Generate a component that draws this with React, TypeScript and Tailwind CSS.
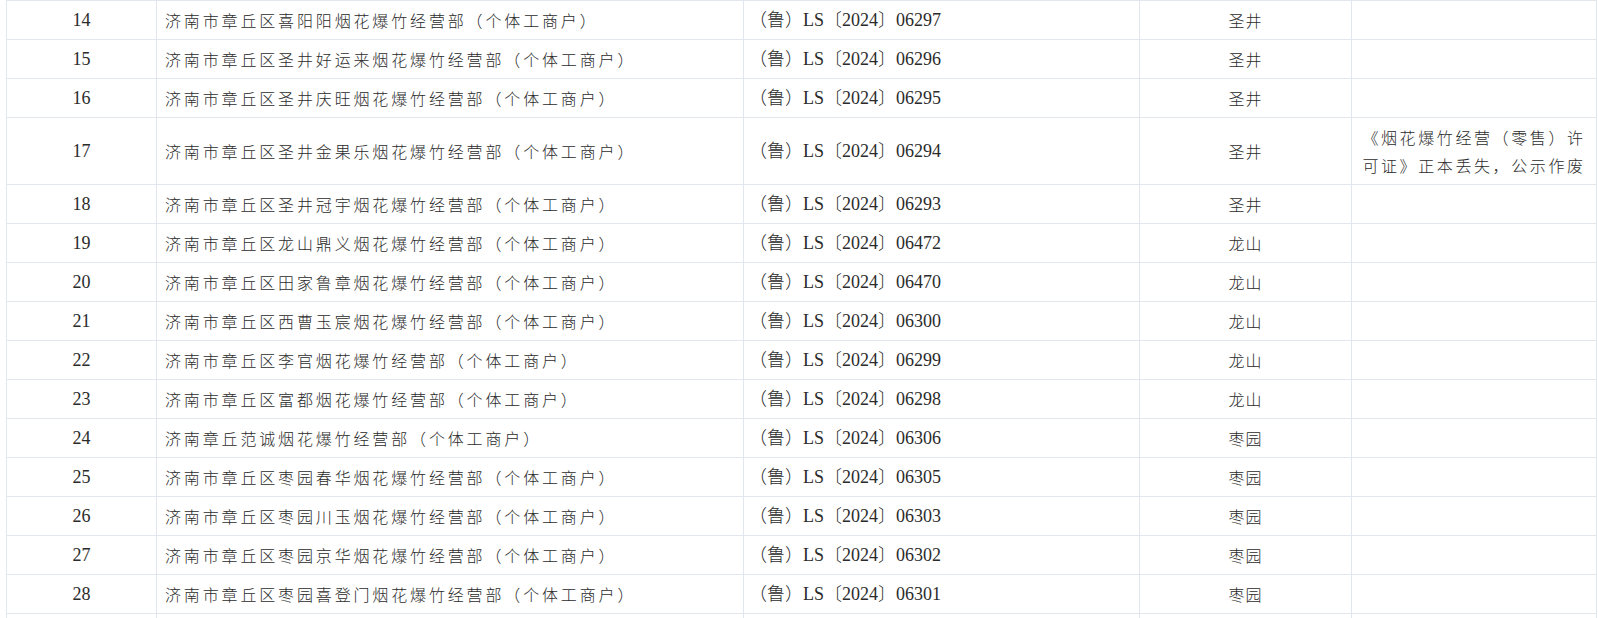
import React from 'react'

interface Row {
  no: number
  name: string
  license: string
  town: string
  note?: string
}

const rows: Row[] = [
  { no: 14, name: '济南市章丘区喜阳阳烟花爆竹经营部（个体工商户）', license: '06297', town: '圣井' },
  { no: 15, name: '济南市章丘区圣井好运来烟花爆竹经营部（个体工商户）', license: '06296', town: '圣井' },
  { no: 16, name: '济南市章丘区圣井庆旺烟花爆竹经营部（个体工商户）', license: '06295', town: '圣井' },
  {
    no: 17,
    name: '济南市章丘区圣井金果乐烟花爆竹经营部（个体工商户）',
    license: '06294',
    town: '圣井',
    note: '《烟花爆竹经营（零售）许可证》正本丢失，公示作废',
  },
  { no: 18, name: '济南市章丘区圣井冠宇烟花爆竹经营部（个体工商户）', license: '06293', town: '圣井' },
  { no: 19, name: '济南市章丘区龙山鼎义烟花爆竹经营部（个体工商户）', license: '06472', town: '龙山' },
  { no: 20, name: '济南市章丘区田家鲁章烟花爆竹经营部（个体工商户）', license: '06470', town: '龙山' },
  { no: 21, name: '济南市章丘区西曹玉宸烟花爆竹经营部（个体工商户）', license: '06300', town: '龙山' },
  { no: 22, name: '济南市章丘区李官烟花爆竹经营部（个体工商户）', license: '06299', town: '龙山' },
  { no: 23, name: '济南市章丘区富都烟花爆竹经营部（个体工商户）', license: '06298', town: '龙山' },
  { no: 24, name: '济南章丘范诚烟花爆竹经营部（个体工商户）', license: '06306', town: '枣园' },
  { no: 25, name: '济南市章丘区枣园春华烟花爆竹经营部（个体工商户）', license: '06305', town: '枣园' },
  { no: 26, name: '济南市章丘区枣园川玉烟花爆竹经营部（个体工商户）', license: '06303', town: '枣园' },
  { no: 27, name: '济南市章丘区枣园京华烟花爆竹经营部（个体工商户）', license: '06302', town: '枣园' },
  { no: 28, name: '济南市章丘区枣园喜登门烟花爆竹经营部（个体工商户）', license: '06301', town: '枣园' },
]

const cell = 'flex min-h-[39px] items-center border-r border-b border-[#e1e7ed]'
const serif = "font-['Liberation_Serif','Noto_Sans_CJK_SC',serif]"
const cjk = "font-['Noto_Sans_CJK_SC',sans-serif]"

const TableRow = ({ row }: { row: Row }) => (
  <>
    <div className={`${cell} justify-center ${serif} text-[18px]`}>{row.no}</div>
    <div className={`${cell} pl-[8px] ${cjk} text-[16px] font-light tracking-[2.85px]`}>{row.name}</div>
    <div className={`${cell} pl-[5px] ${serif} text-[18px] font-light`}>
      <span>
        （鲁）LS〔2024〕{row.license}
      </span>
    </div>
    <div className={`${cell} justify-center ${cjk} text-[16px] font-light tracking-[1px]`}>{row.town}</div>
    <div
      className={`${cell} justify-center px-[4px] py-[5px] text-center ${cjk} text-[16px] leading-[28px] font-light tracking-[2.6px]`}
    >
      {row.note}
    </div>
  </>
)

export default function App() {
  return (
    <div className="h-[618px] overflow-hidden bg-white pl-[6px] text-[#2b2b2b]">
      <div className="grid w-[1591px] grid-cols-[150px_587px_396px_212px_245px] border-t border-l border-[#e1e7ed]">
        {rows.map((row) => (
          <TableRow key={row.no} row={row} />
        ))}
        <div className={cell} />
        <div className={cell} />
        <div className={cell} />
        <div className={cell} />
        <div className={cell} />
      </div>
    </div>
  )
}
